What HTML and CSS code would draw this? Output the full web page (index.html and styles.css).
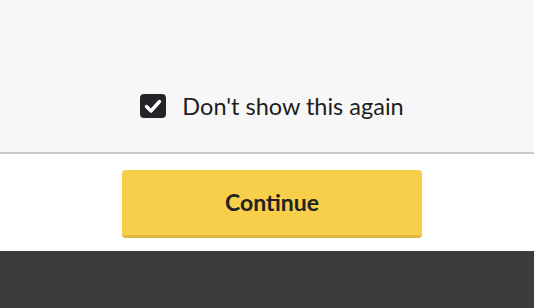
FILE: index.html
```html
<!DOCTYPE html>
<html>
<head>
<meta charset="utf-8">
<link rel="stylesheet" href="styles.css">
</head>
<body>
<div class="top">
  <label class="check-row">
    <span class="box">
      <svg width="26" height="24" viewBox="0 0 26 24">
        <rect x="0" y="0" width="26" height="24" rx="4" fill="#232329"/>
        <path d="M6.5 12.5 L11 17 L19.5 7.5" fill="none" stroke="#fff" stroke-width="3.4" stroke-linecap="round" stroke-linejoin="round"/>
      </svg>
    </span>
    <span class="label">Don't show this again</span>
  </label>
</div>
<div class="actions">
  <button class="btn">Continue</button>
</div>
<div class="footer"></div>
</body>
</html>
```
FILE: styles.css
```css
html, body {
  margin: 0;
  padding: 0;
  font-family: Lato, "Liberation Sans", sans-serif;
  background: #fff;
}
.top {
  background: #f7f7f7;
  border-bottom: 2px solid #cbcbcb;
  display: flex;
  flex-direction: column;
  justify-content: flex-end;
  align-items: center;
  padding: 0 0 34px 10px;
  height: 118px;
}
.check-row {
  display: flex;
  align-items: center;
  gap: 16px;
  height: 24px;
}
.box {
  display: block;
  width: 26px;
  height: 24px;
}
.box svg { display: block; }
.label {
  font-size: 23.5px;
  color: #1e1e1e;
  line-height: 24px;
}
.actions {
  display: flex;
  justify-content: center;
  padding: 16px 0 13px 10px;
}
.btn {
  width: 300px;
  height: 68px;
  box-sizing: border-box;
  background: #f7cf4a;
  border: none;
  border-bottom: 3px solid #dfb53a;
  border-radius: 4px;
  font-family: Lato, "Liberation Sans", sans-serif;
  font-weight: 700;
  font-size: 23px;
  color: #222;
  padding: 0 0 1px 0;
}
.footer {
  height: 57px;
  background: #3c3c3c;
}
```
